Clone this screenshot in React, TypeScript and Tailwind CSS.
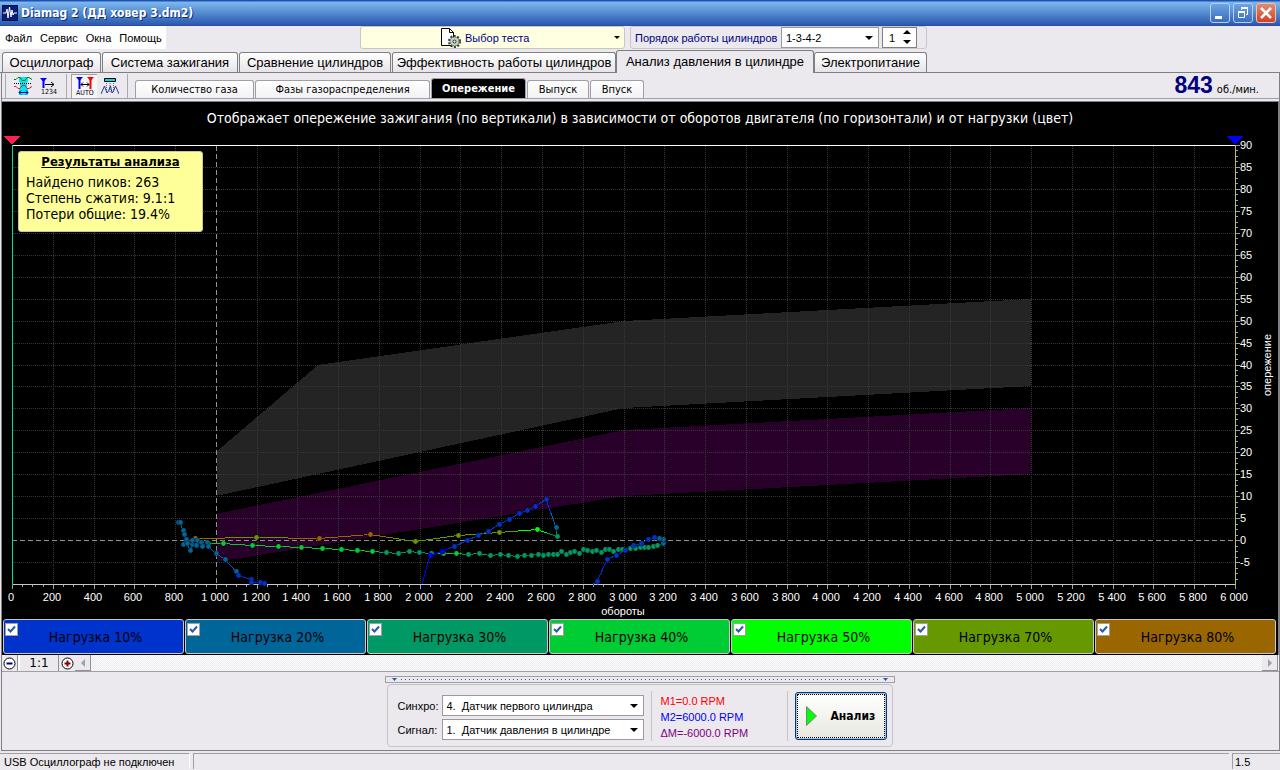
import type { ReactNode } from 'react'

type Point = [x: number, y: number, load: number]

const LOAD_COLORS: Record<number, string> = {
  0: '#0000ff',
  10: '#0033cc',
  20: '#006699',
  30: '#009966',
  40: '#00cc33',
  50: '#00ff00',
  70: '#669900',
  80: '#996600',
}

const loads = [
  { value: 10, className: 'bg-[#0033cc]' },
  { value: 20, className: 'bg-[#006699]' },
  { value: 30, className: 'bg-[#009966]' },
  { value: 40, className: 'bg-[#00cc33]' },
  { value: 50, className: 'bg-[#00ff00]' },
  { value: 70, className: 'bg-[#669900]' },
  { value: 80, className: 'bg-[#996600]' },
]

const mainTabs = [
  { name: 'Осциллограф', width: 'w-[99px]' },
  { name: 'Система зажигания', width: 'w-[136px]' },
  { name: 'Сравнение цилиндров', width: 'w-[152px]' },
  { name: 'Эффективность работы цилиндров', width: 'w-[224px]' },
  { name: 'Анализ давления в цилиндре', width: 'w-[198px]', active: true },
  { name: 'Электропитание', width: 'w-[113px]' },
]

const subTabs = [
  { name: 'Количество газа', width: 'w-[119px]' },
  { name: 'Фазы газораспределения', width: 'w-[175px]' },
  { name: 'Опережение', width: 'w-[95px]', active: true },
  { name: 'Выпуск', width: 'w-[62px]' },
  { name: 'Впуск', width: 'w-[54px]' },
]

const series: Point[][] = [
  [
    [195, 538, 80], [256, 537, 70], [319, 538, 80], [370, 534, 80], [415, 541, 70],
    [458, 535, 70], [499, 532, 70], [537, 529, 50], [557, 536, 30],
  ],
  [
    [208, 543, 40], [223, 543, 40], [252, 545, 40], [278, 546, 40], [301, 547, 40], [322, 548, 40],
    [341, 549, 40], [357, 550, 40], [372, 551, 40], [386, 552, 30], [398, 553, 30], [409, 551, 30],
    [419, 552, 30], [431, 553, 30], [443, 553, 40], [456, 553, 40], [468, 554, 30], [479, 553, 30],
    [490, 555, 30], [500, 554, 30], [508, 555, 30], [517, 556, 30], [524, 555, 30], [531, 555, 30],
    [538, 554, 30], [543, 555, 30], [548, 554, 30], [553, 554, 30], [557, 554, 30], [561, 551, 30],
    [566, 554, 30], [570, 552, 30], [574, 551, 30], [579, 553, 30], [583, 549, 30], [587, 550, 30],
    [592, 551, 30], [596, 550, 30], [601, 552, 30], [605, 549, 30], [609, 549, 30], [613, 551, 30],
    [618, 549, 30], [622, 549, 30], [630, 548, 30], [635, 548, 30], [640, 547, 30], [644, 547, 30],
    [648, 547, 30], [653, 546, 30], [657, 545, 30], [663, 543, 20], [663, 539, 20], [659, 538, 20],
    [654, 537, 10], [648, 539, 10], [641, 543, 10], [633, 545, 10], [625, 550, 10], [616, 555, 10],
    [607, 559, 10], [597, 581, 10], [593, 584, 10],
  ],
  [
    [422, 584, 0], [430, 555, 0], [442, 551, 0], [454, 546, 10], [467, 540, 10], [478, 535, 10],
    [488, 531, 10], [499, 524, 10], [509, 519, 10], [519, 513, 10], [527, 510, 10], [535, 506, 10],
    [546, 499, 10], [556, 527, 20], [557, 536, 30],
  ],
  [
    [178, 522, 20], [180, 522, 20], [183, 530, 20], [184, 534, 20], [186, 539, 20], [183, 544, 20],
    [187, 543, 20], [190, 550, 20], [192, 544, 20], [192, 540, 20], [197, 540, 20], [196, 545, 20],
    [201, 542, 20], [202, 546, 20], [207, 542, 20], [208, 546, 20], [216, 553, 20], [225, 559, 20],
    [236, 571, 20], [238, 575, 10], [251, 579, 10], [251, 582, 10], [260, 582, 10], [264, 583, 10],
  ],
]

const toX = (rpm: number) => Math.round(12 + (rpm * 1223) / 6000)
const toY = (angle: number) => Math.round(145 + (90 - angle) * 4.39)

const range = (from: number, to: number, step: number) =>
  Array.from({ length: Math.round((to - from) / step) + 1 }, (_, i) => from + i * step)

const band = (points: [number, number][]) => points.map(([r, a]) => `${toX(r)},${toY(a)}`).join(' ')

const Curve = ({ points }: { points: Point[] }) => (
  <g>
    {points.slice(1).map(([x, y, load], i) => {
      const [px, py, prevLoad] = points[i]
      const mx = (x + px) / 2
      const my = (y + py) / 2
      return (
        <g key={i} shapeRendering="crispEdges">
          <line x1={px} y1={py + 0.5} x2={mx} y2={my + 0.5} stroke={LOAD_COLORS[prevLoad]} />
          <line x1={mx} y1={my + 0.5} x2={x} y2={y + 0.5} stroke={LOAD_COLORS[load]} />
        </g>
      )
    })}
    {/* points on the lower edge are where a curve leaves the plot */}
    {points
      .filter(([, y]) => y < 584)
      .map(([x, y, load], i) => (
        <circle
          key={i}
          cx={x + 0.5}
          cy={y + 0.5}
          r="2.4"
          fill={LOAD_COLORS[load]}
          stroke="#000"
          strokeWidth="1"
          paintOrder="stroke"
        />
      ))}
  </g>
)

const AdvanceChart = () => (
  <svg viewBox="2 134 1276 485" className="block h-auto w-full" role="img" aria-label="опережение">
    <g shapeRendering="crispEdges">
      <polygon
        fill="#242424"
        points={band([[1000, 20], [1500, 40], [3000, 50], [5000, 55], [5000, 35], [3000, 30], [1000, 10]])}
      />
      <polygon
        fill="#290029"
        points={band([[1000, 6], [3000, 25], [5000, 30], [5000, 15], [3000, 10], [1000, -5]])}
      />
      <g stroke="#383838" strokeDasharray="1 1">
        {range(200, 5800, 200).map((v) => (
          <line key={v} x1={toX(v) + 0.5} x2={toX(v) + 0.5} y1="146" y2="584" />
        ))}
        {range(-5, 85, 5).map((v) => (
          <line key={v} x1="13" x2="1235" y1={toY(v) + 0.5} y2={toY(v) + 0.5} />
        ))}
      </g>
      <path d="M12 540.5H1235" stroke="#000" />
      <path d="M216.5 146V584" stroke="#000" />
      <path d="M12 540.5H1235" stroke="#909090" strokeDasharray="5 3" />
      <path d="M216.5 146V584" stroke="#909090" strokeDasharray="5 3" />
      <g stroke="#a0a0a0">
        {range(0, 6000, 50).map((v) => (
          <line key={v} x1={toX(v) + 0.5} x2={toX(v) + 0.5} y1="585" y2={v % 200 ? 587 : 589} />
        ))}
        {range(-8.75, 90, 1.25).map((v) => (
          <line key={v} x1="1236" x2={v % 5 ? 1238 : 1240} y1={toY(v) + 0.5} y2={toY(v) + 0.5} />
        ))}
      </g>
      <path d="M12 145.5H1236" stroke="#fff" />
      <path d="M12 584.5H1236" stroke="#c8c8c8" />
      <path d="M12.5 145V585" stroke="#00dca0" />
      <path d="M1235.5 145V585" stroke="#c0c040" />
      <path d="M4 136H20L12 144.5Z" fill="#ff2058" />
      <path d="M1227 136H1243L1235 144.5Z" fill="#0000ff" />
    </g>
    {series.map((points, i) => (
      <Curve key={i} points={points} />
    ))}
    <g fill="#fff" fontSize="11" fontFamily="Liberation Sans, Arial, sans-serif">
      {range(0, 6000, 200).map((v) => (
        <text key={v} x={toX(v) - 1} y="601" textAnchor="middle">
          {v < 1000 ? v : `${Math.floor(v / 1000)} ${String(v % 1000).padStart(3, '0')}`}
        </text>
      ))}
      {range(-5, 90, 5).map((v) => (
        <text key={v} x="1240" y={toY(v) + 4}>
          {v}
        </text>
      ))}
      <text x="623" y="615" textAnchor="middle">обороты</text>
      <text transform="translate(1271 365) rotate(-90)" textAnchor="middle">опережение</text>
    </g>
  </svg>
)

const Arrow = ({ className = '' }: { className?: string }) => (
  <svg viewBox="0 0 8 4" className={`pointer-events-none h-1 w-2 ${className}`} aria-hidden="true">
    <path d="M0 0H8L4 4Z" fill="currentColor" />
  </svg>
)

const Select = ({ id, value, className }: { id: string; value: string; className: string }) => (
  <div className={`relative ${className}`}>
    <select id={id} className="h-full w-full appearance-none border border-[#9a9a9e] bg-white pl-1 text-black">
      <option>{value}</option>
    </select>
    <Arrow className="absolute top-1/2 right-1.5 -translate-y-1/2" />
  </div>
)

const ToolButton = ({ label, pressed, children }: { label: string; pressed?: boolean; children: ReactNode }) => (
  <button
    type="button"
    aria-label={label}
    className={`flex h-6 w-[26px] items-center justify-center ${pressed ? 'border-t border-l border-[#a0a0a4] bg-[#f6f5f8]' : ''}`}
  >
    {children}
  </button>
)

const TitleBar = () => (
  <header className="flex h-[26px] items-center border-b border-[#2a4f9e] bg-linear-to-b from-[#2050b0] from-4% via-[#7db8ec] via-8% to-[#2c58b0] pl-0.5 pr-1">
    <svg width="16" height="16" viewBox="0 0 16 16" aria-hidden="true">
      <path d="M0 0H16V16H0Z" fill="#0a1e78" />
      <path d="M.5.5H15.5V15.5H.5Z" fill="none" stroke="#06124c" />
      <path d="M1 8H4L5 4L6 13L7.5 2L9 12L10 5L11 10L12 8H15" fill="none" stroke="#fff" />
    </svg>
    <h1 className="ml-[3px] flex-1 font-['DejaVu_Sans_Condensed',sans-serif] text-xs font-bold text-white [text-shadow:1px_1px_#10307c]">
      Diamag 2 (ДД ховер 3.dm2)
    </h1>
    <div className="flex gap-[3px]">
      <button type="button" aria-label="Minimize" className="size-5 rounded-[3px] border border-[#b4d0f4] bg-linear-to-b from-[#6da4e0] to-[#3a6cc0]">
        <svg viewBox="0 0 18 18"><path d="M4 12H11V15H4Z" fill="#fff" /></svg>
      </button>
      <button type="button" aria-label="Restore" className="size-5 rounded-[3px] border border-[#b4d0f4] bg-linear-to-b from-[#6da4e0] to-[#3a6cc0]">
        <svg viewBox="0 0 18 18" fill="none" stroke="#fff">
          <path d="M4.5 8.5H10.5V13.5H4.5Z M4 7.5H11" />
          <path d="M7.5 6V4.5H13.5V10.5H12 M7 3.5H14" />
        </svg>
      </button>
      <button type="button" aria-label="Close" className="size-5 rounded-[3px] border border-[#f0c0b0] bg-linear-to-b from-[#e08a70] to-[#d04020]">
        <svg viewBox="0 0 18 18"><path d="M4 4L14 14M14 4L4 14" stroke="#fff" strokeWidth="2.5" /></svg>
      </button>
    </div>
  </header>
)

const MenuRow = () => (
  <div className="flex h-6 items-start">
    <nav className="flex h-[23px] w-[166px] items-center gap-2 bg-white pl-[5px]">
      {['Файл', 'Сервис', 'Окна', 'Помощь'].map((item) => (
        <button key={item} type="button">{item}</button>
      ))}
    </nav>
    <button
      type="button"
      className="ml-[194px] flex h-[23px] w-[265px] items-center rounded-[3px] border border-[#c8c8c0] bg-[#ffffe1] pr-1 pl-20 text-[#000080]"
    >
      <svg width="20" height="20" viewBox="0 0 20 20" fill="none" aria-hidden="true">
        <path d="M.5.5H8.5L12.5 4.5V17.5H.5Z" fill="#fff" stroke="#000" />
        <path d="M8.5.5V4.5H12.5" stroke="#000" />
        <circle cx="13.5" cy="13.5" r="5.5" stroke="#333" strokeWidth="2" strokeDasharray="2 1.5" />
        <circle cx="13.5" cy="13.5" r="4.5" fill="#c4d4c4" stroke="#687868" />
        <circle cx="13.5" cy="13.5" r="1.5" fill="#fff" stroke="#222" />
      </svg>
      <span className="ml-1 flex-1 text-left">Выбор теста</span>
      <svg width="6" height="3" viewBox="0 0 6 3" aria-hidden="true"><path d="M0 0H6L3 3Z" fill="#000" /></svg>
    </button>
    <div className="ml-[5px] flex h-[23px] w-[297px] items-center rounded-[3px] border border-[#c8c8cc] pl-1">
      <label htmlFor="order" className="w-[146px] whitespace-nowrap text-[#000080]">Порядок работы цилиндров</label>
      <Select id="order" value="1-3-4-2" className="h-[21px] w-[98px]" />
      <div className="relative ml-[3px] h-[21px] w-[35px]">
        <input
          aria-label="Цилиндр"
          defaultValue="1"
          className="h-full w-full border border-[#808080] bg-white pl-1.5"
        />
        <svg className="pointer-events-none absolute top-[3px] right-1.5" width="8" height="14" viewBox="0 0 8 14" aria-hidden="true">
          <path d="M0 4H8L4 0Z M0 10H8L4 14Z" fill="#000" />
        </svg>
      </div>
    </div>
  </div>
)

const MainTabs = () => (
  <div role="tablist" className="flex h-[23px] items-end gap-px border-b border-[#808084] pl-0.5 text-[13px]">
    {mainTabs.map((tab) => (
      <button
        key={tab.name}
        type="button"
        role="tab"
        aria-selected={!!tab.active}
        className={`rounded-t-[3px] border border-b-0 border-[#808084] whitespace-nowrap ${tab.width} ${
          tab.active ? '-mx-px -mb-px h-[23px] bg-[#ebe9ed]' : 'h-5 bg-linear-to-b from-white to-[#e6e4e8]'
        }`}
      >
        {tab.name}
      </button>
    ))}
  </div>
)

const Toolbar = () => (
  <div className="flex h-[26px] items-end border-b border-[#a0a0a4] font-['DejaVu_Sans_Condensed',sans-serif]">
    <div className="flex w-[133px] items-center self-stretch pl-[3px]">
      <div className="flex border-x border-[#a8a8ac] px-1">
        <ToolButton label="Сигнал">
          <svg width="18" height="18" viewBox="0 0 18 18" fill="none">
            <path d="M5 0H14V5H13V12H14V18H5V12H6V5H5Z" fill="#00e8f8" />
            <path d="M0 2.5H2L4 .5H6L8 3.5H11L13 .5H15L18 2.5" stroke="#008000" />
            <path d="M0 6.5H18" stroke="#000" strokeDasharray="1 1" />
            <path d="M0 9.5H2L4 11.5H6L8 8.5H11L13 11.5H15L18 9.5" stroke="#e02020" />
            <path d="M5 15.5H14M7 13.5L5 15.5L7 17.5M12 13.5L14 15.5L12 17.5" stroke="#0000a0" />
          </svg>
        </ToolButton>
        <ToolButton label="Счёт">
          <svg width="18" height="18" viewBox="0 0 18 18" fill="none">
            <path d="M0 1H7L3.5 5Z" fill="#0000ff" />
            <path d="M3.5 2V11" stroke="#0000ff" strokeWidth="2" />
            <path d="M5 7.5H14M11 5L14 7.5L11 10" stroke="#000" />
            <text x="1" y="17" fontSize="7" fill="#000">1234</text>
          </svg>
        </ToolButton>
      </div>
      <div className="ml-1 flex border-r border-[#a8a8ac] pr-1">
        <ToolButton label="Авто" pressed>
          <svg width="20" height="20" viewBox="0 0 20 20" fill="none">
            <path d="M1 1H8L4.5 5Z" fill="#0000ff" />
            <path d="M4.5 2V13" stroke="#0000ff" strokeWidth="2" />
            <path d="M12 1H19L15.5 5Z" fill="#ff0000" />
            <path d="M15.5 2V13" stroke="#ff0000" strokeWidth="2" />
            <path d="M6 8.5H14M8 6.5L6 8.5L8 10.5M12 6.5L14 8.5L12 10.5" stroke="#000" />
            <text x="1" y="19" fontSize="7" fill="#000">AUTO</text>
          </svg>
        </ToolButton>
        <ToolButton label="Пики">
          <svg width="18" height="18" viewBox="0 0 18 18" fill="none">
            <path d="M3.5 1.5H14.5V4.5H3.5Z" fill="#00d8e8" stroke="#000" />
            <path d="M5.5 6V15M9 6V15M12.5 6V15" stroke="#666" strokeDasharray="1 1" />
            <path d="M0 17L3.5 9L6 16L7.5 14L9.5 9L11 16L12.5 14L14.5 9L18 17" stroke="#2838a0" />
          </svg>
        </ToolButton>
      </div>
    </div>
    <div role="tablist" className="flex items-end gap-px">
      {subTabs.map((tab) => (
        <button
          key={tab.name}
          type="button"
          role="tab"
          aria-selected={!!tab.active}
          className={`rounded-t-[3px] border border-b-0 border-[#a0a0a4] whitespace-nowrap ${tab.width} ${
            tab.active ? 'h-5 bg-black font-bold text-white' : 'h-[18px] bg-linear-to-b from-white to-[#f2f1f4]'
          }`}
        >
          {tab.name}
        </button>
      ))}
    </div>
    <p className="mr-5 ml-auto flex items-baseline gap-1">
      <strong className="font-['Liberation_Sans',sans-serif] text-[23px] leading-5 text-[#000080]">843</strong>
      об./мин.
    </p>
  </div>
)

const ResultsBox = () => (
  <section className="absolute top-[49px] left-4 h-[81px] w-[185px] rounded-[3px] border border-[#c8c8a0] bg-[#ffff99] px-[7px] pt-0.5 text-sm leading-4 text-black">
    <h3 className="mb-1 text-center text-[13px] leading-4 font-bold underline">Результаты анализа</h3>
    <p>Найдено пиков: 263</p>
    <p>Степень сжатия: 9.1:1</p>
    <p>Потери общие: 19.4%</p>
  </section>
)

const LoadButtons = () => (
  <div className="grid grid-cols-7 gap-px bg-black pr-0.5 pb-px pl-px">
    {loads.map((load) => (
      <label
        key={load.value}
        className={`relative flex h-[35px] items-center justify-center rounded-[3px] border border-[#c8c8c8] pl-1 text-sm text-black ${load.className}`}
      >
        <span className="absolute top-[3px] left-px flex size-[13px]">
          <input type="checkbox" defaultChecked className="peer size-full appearance-none border border-[#a0a0a0] bg-white" />
          <svg viewBox="0 0 13 13" className="pointer-events-none absolute inset-0 hidden peer-checked:block" aria-hidden="true">
            <path d="M3 6L5.5 8.5L10 3.5" fill="none" stroke="#2858a8" strokeWidth="2" />
          </svg>
        </span>
        Нагрузка {load.value}%
      </label>
    ))}
  </div>
)

const ZoomRow = () => (
  <div className="flex h-[17px] border-b border-[#a0a0a4] bg-[#f6f5f8]">
    <button type="button" aria-label="Уменьшить" className="flex w-4 items-center justify-center border-r border-[#909094] bg-[#ebe9ed]">
      <svg width="13" height="13" viewBox="0 0 13 13" fill="none">
        <circle cx="6.5" cy="6.5" r="5.5" fill="#fff" stroke="#000" />
        <path d="M3.5 6.5H9.5" stroke="#000080" strokeWidth="2" />
      </svg>
    </button>
    <button type="button" className="ml-px w-10 border-r border-l border-r-[#909094] border-l-white bg-[#ebe9ed] font-['DejaVu_Sans',sans-serif] text-xs leading-4">
      1:1
    </button>
    <button type="button" aria-label="Увеличить" className="flex w-4 items-center justify-center bg-[#ebe9ed]">
      <svg width="13" height="13" viewBox="0 0 13 13" fill="none">
        <circle cx="6.5" cy="6.5" r="5.5" fill="#fff" stroke="#000" />
        <path d="M3.5 6.5H9.5M6.5 3.5V9.5" stroke="#800000" strokeWidth="2" />
      </svg>
    </button>
    <button type="button" aria-label="Влево" className="flex w-4 items-center justify-center border-r border-b border-[#909094] bg-[#ebe9ed]">
      <svg width="4" height="8" viewBox="0 0 4 8"><path d="M4 0V8L0 4Z" fill="#a0a0a4" /></svg>
    </button>
    <div className="flex-1 bg-[repeating-conic-gradient(#ebe9ed_0_25%,#ffffff_0_50%)] bg-size-[2px_2px]" />
    <button type="button" aria-label="Вправо" className="mr-px flex w-4 items-center justify-center border-r border-b border-[#909094] bg-[#ebe9ed]">
      <svg width="4" height="8" viewBox="0 0 4 8"><path d="M0 0V8L4 4Z" fill="#a0a0a4" /></svg>
    </button>
  </div>
)

const ControlPanel = () => (
  <div className="flex h-[78px] flex-col items-center pt-1 pr-0.5">
    <div className="flex h-[7px] w-[510px] items-center gap-1 border border-[#a0a0a4] px-1.5 text-[#2858a8]">
      <svg width="5" height="3" viewBox="0 0 5 3"><path d="M0 0H5L2.5 3Z" fill="currentColor" /></svg>
      <div className="h-px flex-1 bg-[repeating-linear-gradient(90deg,#2858a8_0_1px,transparent_1px_4px)]" />
      <svg width="5" height="3" viewBox="0 0 5 3"><path d="M0 0H5L2.5 3Z" fill="currentColor" /></svg>
    </div>
    <div className="mt-px flex h-[63px] w-[506px] items-center rounded-[4px] border border-[#c4c4c8] pr-[5px] pl-2.5">
      <div className="grid grid-cols-[44px_202px] items-center gap-y-[3px] pt-1">
        <label htmlFor="sync">Синхро:</label>
        <Select id="sync" value={'4.\u00a0\u00a0Датчик первого цилиндра'} className="h-[21px]" />
        <label htmlFor="signal">Сигнал:</label>
        <Select id="signal" value={'1.\u00a0\u00a0Датчик давления в цилиндре'} className="h-[21px]" />
      </div>
      <div className="ml-[7px] flex h-[50px] flex-1 flex-col justify-center border-x border-[#c4c4c8] pt-0.5 pl-[9px] leading-4">
        <p className="text-[#ff0000]">M1=0.0 RPM</p>
        <p className="text-[#0000ff]">M2=6000.0 RPM</p>
        <p className="text-[#800080]">ΔM=-6000.0 RPM</p>
      </div>
      <button
        type="button"
        className="ml-[7px] h-12 w-[92px] rounded-[3px] border border-[#003c74] bg-[#a8c0e8] p-px font-['DejaVu_Sans_Condensed',sans-serif]"
      >
        <span className="flex h-full items-center border border-dotted border-black bg-linear-to-b from-white to-[#e8e8e0] pl-2 text-xs font-bold">
          <svg width="11" height="20" viewBox="0 0 11 20" aria-hidden="true">
            <path d="M.5.5L10.5 10L.5 19.5Z" fill="#00ff00" stroke="#808080" />
          </svg>
          <span className="ml-3.5">Анализ</span>
        </span>
      </button>
    </div>
  </div>
)

export default function App() {
  return (
    <div className="min-h-screen bg-[#ebe9ed] font-['Liberation_Sans',Arial,sans-serif] text-[11px] leading-4 text-black">
      <TitleBar />
      <MenuRow />
      <MainTabs />
      <main className="ml-px border-x border-b border-[#808084]">
        <Toolbar />
        <div className="mt-0.5 border-t border-r border-[#808084] bg-black font-['DejaVu_Sans_Condensed',Verdana,sans-serif]">
          <div className="relative">
            <h2 className="h-8 text-center text-sm leading-8 text-white">
              Отображает опережение зажигания (по вертикали) в зависимости от оборотов двигателя (по горизонтали) и от нагрузки (цвет)
            </h2>
            <AdvanceChart />
            <ResultsBox />
          </div>
          <LoadButtons />
        </div>
        <ZoomRow />
        <ControlPanel />
      </main>
      <footer className="flex h-[18px] gap-[3px] pt-0.5">
        <p className="w-[190px] border-t border-r border-t-[#a0a0a4] border-r-white pl-1">USB Осциллограф не подключен</p>
        <p className="flex-1 border-t border-l border-[#a0a0a4]" />
        <p className="w-12 border-t border-l border-[#a0a0a4] pl-0.5">1.5</p>
      </footer>
    </div>
  )
}
